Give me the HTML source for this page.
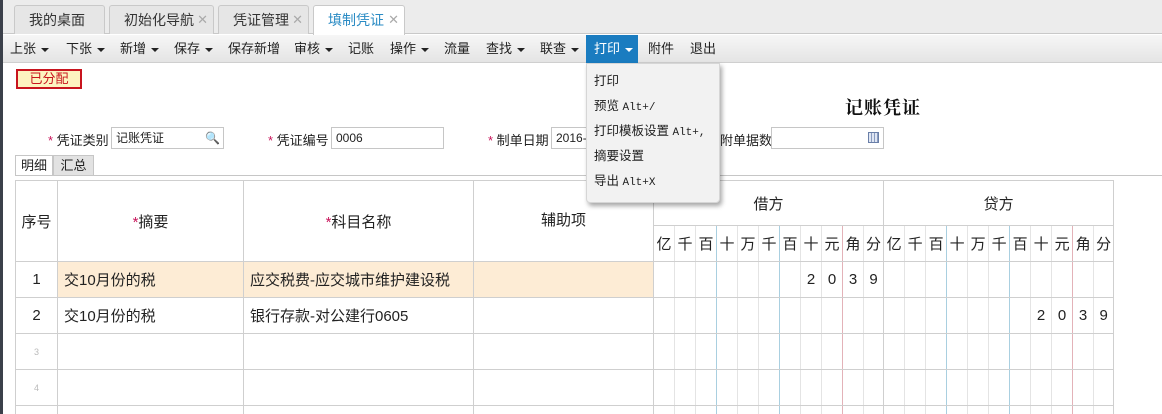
<!DOCTYPE html>
<html><head><meta charset="utf-8"><style>
*{margin:0;padding:0;box-sizing:border-box}
html,body{width:1162px;height:414px;overflow:hidden}
body{background:#fff;font-family:"Liberation Sans","Noto Sans CJK SC",sans-serif;font-size:13px;color:#222;position:relative}
.abs{position:absolute}
.lbar{left:0;top:0;width:3px;height:414px;background:#3b404a}
.tabbar{left:3px;top:0;width:1159px;height:34px;background:#ececec;border-bottom:1px solid #c9c9c9}
.tab{top:5px;height:29px;border:1px solid #c9c9c9;border-bottom:none;border-radius:3px 3px 0 0;background:#e6e6e6;font-size:14px;line-height:28px;color:#333;padding-left:14px}
.tab .x{color:#aaa;font-size:13px;position:absolute;right:5px;top:0}
.tab.act{background:#fff;color:#2a8bc4;height:30px}
.tool{left:3px;top:35px;width:1159px;height:28px;background:linear-gradient(#f6f6f6,#e4e4e4);border-bottom:1px solid #cfcfcf}
.ti{top:35px;height:28px;line-height:28px;font-size:13px;color:#222}
.car{display:inline-block;width:0;height:0;border-left:4px solid transparent;border-right:4px solid transparent;border-top:4px solid #222;vertical-align:middle;margin-left:5px}
.badge{left:16px;top:69px;width:66px;height:20px;border:2px solid #c8141e;background:#fdf3c0;color:#c8141e;font-size:13px;line-height:16px;text-align:center}
.title{left:845px;top:94px;font-size:18px;font-weight:bold;font-family:"Noto Serif CJK SC",serif;color:#111;letter-spacing:1px}
.lab{top:130px;font-size:13px}
.star{color:#c8145a}
.inp{top:127px;height:22px;border:1px solid #c6c6c6;background:#fff;font-size:12px;line-height:20px;padding-left:4px}
.st{top:155px;height:21px;border:1px solid #c6c6c6;border-bottom:none;font-size:13px;line-height:20px;text-align:center;background:#e2e2e2}
table{position:absolute;left:15px;top:180px;border-collapse:collapse;table-layout:fixed;width:1099px}
td{border:1px solid #cfcfcf;text-align:center;font-size:15px;padding:0;overflow:hidden;white-space:nowrap}
td.l{text-align:left;padding-left:6px}
tr.h1 td{height:45px}
tr.h2 td{height:36px;font-size:15px}
tr.d td{height:36px}
tr.z td{height:9px;border-bottom:none}
td.f{border-right-style:none}
td.g{border-left-color:#e4e4e4;border-right-style:none}
td.b{border-left-color:#a9cfe0;border-right-style:none}
td.r{border-left-color:#e3b2b8;border-right-style:none}
td.e{border-right:1px solid #cfcfcf}
.o{background:#fdecd5}
.menu{left:586px;top:63px;width:134px;height:140px;background:#f2f2f2;border:1px solid #d6d6d6;border-radius:0 0 4px 4px;box-shadow:2px 3px 5px rgba(0,0,0,.35)}
.mi{left:7px;font-size:12.5px;color:#222}
.mono{font-family:"Liberation Mono",monospace;font-size:11px}
</style></head><body>
<div class="abs lbar"></div>
<div class="abs tabbar"></div>
<div class="abs tab" style="left:14px;width:91px">我的桌面</div>
<div class="abs tab" style="left:109px;width:105px">初始化导航<span class="x">✕</span></div>
<div class="abs tab" style="left:218px;width:91px">凭证管理<span class="x">✕</span></div>
<div class="abs tab act" style="left:313px;width:92px">填制凭证<span class="x">✕</span></div>
<div class="abs tool"></div>
<div class="abs" style="left:586px;top:35px;width:52px;height:28px;background:#1a7cc0"></div>
<div class="abs ti" style="left:10px">上张<span class="car"></span></div>
<div class="abs ti" style="left:66px">下张<span class="car"></span></div>
<div class="abs ti" style="left:120px">新增<span class="car"></span></div>
<div class="abs ti" style="left:174px">保存<span class="car"></span></div>
<div class="abs ti" style="left:228px">保存新增</div>
<div class="abs ti" style="left:294px">审核<span class="car"></span></div>
<div class="abs ti" style="left:348px">记账</div>
<div class="abs ti" style="left:390px">操作<span class="car"></span></div>
<div class="abs ti" style="left:444px">流量</div>
<div class="abs ti" style="left:486px">查找<span class="car"></span></div>
<div class="abs ti" style="left:540px">联查<span class="car"></span></div>
<div class="abs ti" style="left:594px;color:#fff">打印<span class="car" style="border-top-color:#fff"></span></div>
<div class="abs ti" style="left:648px">附件</div>
<div class="abs ti" style="left:690px">退出</div>
<div class="abs badge">已分配</div>
<div class="abs title">记账凭证</div>
<div class="abs lab" style="left:48px"><span class="star">*</span> 凭证类别</div>
<div class="abs inp" style="left:111px;width:113px">记账凭证<span style="position:absolute;right:3px;top:0;color:#999">🔍</span></div>
<div class="abs lab" style="left:268px"><span class="star">*</span> 凭证编号</div>
<div class="abs inp" style="left:331px;width:113px">0006</div>
<div class="abs lab" style="left:488px"><span class="star">*</span> 制单日期</div>
<div class="abs inp" style="left:551px;width:60px">2016-</div>
<div class="abs lab" style="left:720px">附单据数</div>
<div class="abs inp" style="left:771px;width:113px"><span style="position:absolute;right:4px;top:4px;width:11px;height:11px;border:1px solid #6a7fa8;background:repeating-linear-gradient(90deg,#dfe6f3 0 2px,#8a9cc0 2px 3px)"></span></div>
<div class="abs st" style="left:15px;width:38px;background:#fff">明细</div>
<div class="abs st" style="left:53px;width:41px">汇总</div>
<div class="abs" style="left:15px;top:175px;width:1147px;height:1px;background:#c6c6c6"></div>
<table>
<colgroup><col style="width:42px"><col style="width:186px"><col style="width:230px"><col style="width:180px">
<col style="width:21px"><col style="width:21px"><col style="width:21px"><col style="width:21px"><col style="width:21px"><col style="width:21px"><col style="width:21px"><col style="width:21px"><col style="width:21px"><col style="width:21px"><col style="width:20px">
<col style="width:21px"><col style="width:21px"><col style="width:21px"><col style="width:21px"><col style="width:21px"><col style="width:21px"><col style="width:21px"><col style="width:21px"><col style="width:21px"><col style="width:21px"><col style="width:20px"></colgroup>
<tr class="h1"><td rowspan="2">序号</td><td rowspan="2"><span class="star">*</span>摘要</td><td rowspan="2"><span class="star">*</span>科目名称</td><td rowspan="2" style="vertical-align:top;padding-top:28px">辅助项</td><td colspan="11">借方</td><td colspan="11">贷方</td></tr>
<tr class="h2"><td class="f">亿</td><td class="g">千</td><td class="g">百</td><td class="b">十</td><td class="g">万</td><td class="g">千</td><td class="b">百</td><td class="g">十</td><td class="g">元</td><td class="r">角</td><td class="g">分</td><td class="f">亿</td><td class="g">千</td><td class="g">百</td><td class="b">十</td><td class="g">万</td><td class="g">千</td><td class="b">百</td><td class="g">十</td><td class="g">元</td><td class="r">角</td><td class="g e">分</td></tr>
<tr class="d"><td>1</td><td class="l o">交10月份的税</td><td class="l o">应交税费-应交城市维护建设税</td><td class="o"></td><td class="f"></td><td class="g"></td><td class="g"></td><td class="b"></td><td class="g"></td><td class="g"></td><td class="b"></td><td class="g">2</td><td class="g">0</td><td class="r">3</td><td class="g">9</td><td class="f"></td><td class="g"></td><td class="g"></td><td class="b"></td><td class="g"></td><td class="g"></td><td class="b"></td><td class="g"></td><td class="g"></td><td class="r"></td><td class="g e"></td></tr>
<tr class="d"><td>2</td><td class="l">交10月份的税</td><td class="l">银行存款-对公建行0605</td><td></td><td class="f"></td><td class="g"></td><td class="g"></td><td class="b"></td><td class="g"></td><td class="g"></td><td class="b"></td><td class="g"></td><td class="g"></td><td class="r"></td><td class="g"></td><td class="f"></td><td class="g"></td><td class="g"></td><td class="b"></td><td class="g"></td><td class="g"></td><td class="b"></td><td class="g">2</td><td class="g">0</td><td class="r">3</td><td class="g e">9</td></tr>
<tr class="d"><td style="font-size:9px;color:#bbb">3</td><td></td><td></td><td></td><td class="f"></td><td class="g"></td><td class="g"></td><td class="b"></td><td class="g"></td><td class="g"></td><td class="b"></td><td class="g"></td><td class="g"></td><td class="r"></td><td class="g"></td><td class="f"></td><td class="g"></td><td class="g"></td><td class="b"></td><td class="g"></td><td class="g"></td><td class="b"></td><td class="g"></td><td class="g"></td><td class="r"></td><td class="g e"></td></tr>
<tr class="d"><td style="font-size:9px;color:#bbb">4</td><td></td><td></td><td></td><td class="f"></td><td class="g"></td><td class="g"></td><td class="b"></td><td class="g"></td><td class="g"></td><td class="b"></td><td class="g"></td><td class="g"></td><td class="r"></td><td class="g"></td><td class="f"></td><td class="g"></td><td class="g"></td><td class="b"></td><td class="g"></td><td class="g"></td><td class="b"></td><td class="g"></td><td class="g"></td><td class="r"></td><td class="g e"></td></tr>
<tr class="z"><td></td><td></td><td></td><td></td><td class="f"></td><td class="g"></td><td class="g"></td><td class="b"></td><td class="g"></td><td class="g"></td><td class="b"></td><td class="g"></td><td class="g"></td><td class="r"></td><td class="g"></td><td class="f"></td><td class="g"></td><td class="g"></td><td class="b"></td><td class="g"></td><td class="g"></td><td class="b"></td><td class="g"></td><td class="g"></td><td class="r"></td><td class="g e"></td></tr>
</table>
<div class="abs menu">
<div class="abs mi" style="top:6px">打印</div>
<div class="abs mi" style="top:31px">预览 <span class="mono">Alt+/</span></div>
<div class="abs mi" style="top:56px">打印模板设置 <span class="mono">Alt+,</span></div>
<div class="abs mi" style="top:81px">摘要设置</div>
<div class="abs mi" style="top:106px">导出 <span class="mono">Alt+X</span></div>
</div>
</body></html>
